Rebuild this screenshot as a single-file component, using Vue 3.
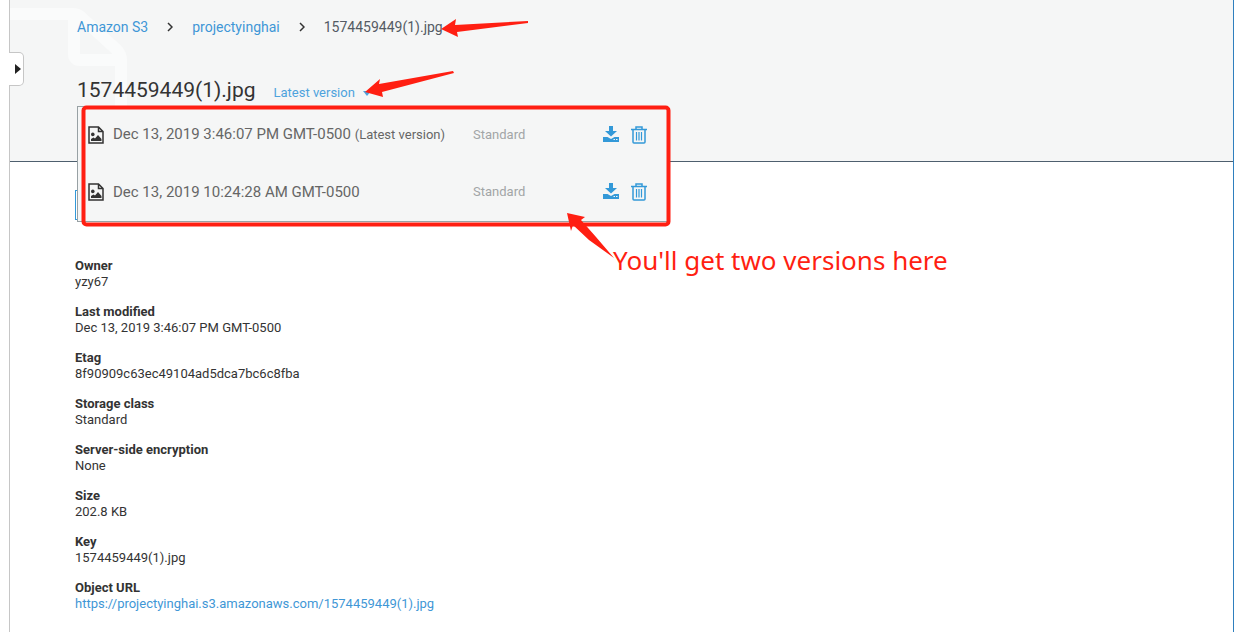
<script setup>
const fileName = '1574459449(1).jpg'

const versions = [
  { date: 'Dec 13, 2019 3:46:07 PM GMT-0500', note: '(Latest version)', storage: 'Standard' },
  { date: 'Dec 13, 2019 10:24:28 AM GMT-0500', note: '', storage: 'Standard' },
]

const details = [
  { label: 'Owner', value: 'yzy67' },
  { label: 'Last modified', value: 'Dec 13, 2019 3:46:07 PM GMT-0500' },
  { label: 'Etag', value: '8f90909c63ec49104ad5dca7bc6c8fba' },
  { label: 'Storage class', value: 'Standard' },
  { label: 'Server-side encryption', value: 'None' },
  { label: 'Size', value: '202.8 KB' },
  { label: 'Key', value: fileName },
  { label: 'Object URL', value: 'https://projectyinghai.s3.amazonaws.com/1574459449(1).jpg', link: true },
]
</script>

<template>
  <div class="page">
    <main class="console">
      <header class="head">
        <svg class="watermark" width="118" height="108" viewBox="0 0 118 108" aria-hidden="true">
          <path d="M0 14H63Q67 14 71 17L106 49Q111 54 111 60V108M64 14V54Q64 60 70 60H110" />
        </svg>
        <nav class="crumbs" aria-label="Breadcrumb">
          <a href="#s3">Amazon S3</a>
          <svg class="chevron" width="6" height="10" viewBox="0 0 6 10"><path d="M1 1l4 4-4 4" /></svg>
          <a href="#bucket">projectyinghai</a>
          <svg class="chevron" width="6" height="10" viewBox="0 0 6 10"><path d="M1 1l4 4-4 4" /></svg>
          <span>{{ fileName }}</span>
        </nav>
        <div class="title-row">
          <h1>{{ fileName }}</h1>
          <div class="picker">
            <button class="version-toggle" type="button" aria-expanded="true">
              Latest version
              <svg width="8" height="5" viewBox="0 0 8 5"><path d="M0 0h8L4 5z" fill="#4ea3dd" /></svg>
            </button>
          </div>
          <ul class="menu">
            <li v-for="v in versions" :key="v.date">
              <svg class="file" width="16" height="18" viewBox="0 0 16 18" aria-hidden="true">
                <path d="M1 1h9.500l4.500 4.500V17H1zM10.500 1v4.500H15" fill="none" stroke="#333" stroke-width="1.500" />
                <circle cx="4.800" cy="8.400" r="1.800" fill="#333" />
                <path d="M3 15v-2l2.500-1.500 1.500 1 3-3.500 3.500 4V15z" fill="#333" />
              </svg>
              <span class="when">{{ v.date }} <small v-if="v.note">{{ v.note }}</small></span>
              <span class="storage">{{ v.storage }}</span>
              <button type="button" aria-label="Download">
                <svg width="17" height="18" viewBox="0 0 17 18">
                  <path d="M6 0h4v5h4L8 10.500 2 5h4zM0 11h4.500l3.500 2 3.500-2H16v5H0z" fill="#3399d8" />
                  <path d="M10.500 13.500H12M13 13.500h1.500" stroke="#f5f6f6" />
                </svg>
              </button>
              <button type="button" aria-label="Delete">
                <svg width="16" height="18" viewBox="0 0 16 18" fill="none" stroke="#3399d8">
                  <path d="M0 3.500h16M5 3V1h6v2M2 4v12q0 1 1 1h10q1 0 1-1V4" stroke-width="1.500" />
                  <path d="M5.500 6v8.500M8 6v8.500M10.500 6v8.500" stroke-width="1.200" />
                </svg>
              </button>
            </li>
          </ul>
        </div>
      </header>

      <section class="body">
        <button class="open" type="button" aria-label="Open"></button>
        <dl>
          <div v-for="d in details" :key="d.label">
            <dt>{{ d.label }}</dt>
            <dd>
              <a v-if="d.link" :href="d.value">{{ d.value }}</a>
              <template v-else>{{ d.value }}</template>
            </dd>
          </div>
        </dl>
      </section>
    </main>

    <button class="drawer" type="button" aria-label="Open navigation">
      <svg width="6" height="10" viewBox="0 0 6 10"><path d="M0 0l6 5-6 5z" fill="#222" /></svg>
    </button>

    <svg class="marks" width="700" height="280" viewBox="0 0 700 280" fill="#ff1f12" aria-hidden="true">
      <path d="M441 29L456 19 455 25 528 21V23L457 32 458 37z" />
      <path d="M365 92L380 79 379 84 453 71 454 73 382 92 383 97z" />
      <path d="M567 213L585 217 581 220 596 237 614 258 589 240 573 225 571 231z" />
      <rect x="83.500" y="107.500" width="585" height="117" rx="3" fill="none" stroke="#ff1f12" stroke-width="4" />
    </svg>
    <p class="callout">You'll get two versions here</p>
  </div>
</template>

<style>
body {
  margin: 0;
  background: #fff;
}
</style>

<style scoped>
.page {
  position: relative;
  box-sizing: border-box;
  min-height: 100vh;
  padding-left: 9px;
  overflow: hidden;
  color: #333;
  font: 13px/16px Roboto, sans-serif;
}
.console {
  box-sizing: border-box;
  min-height: 100vh;
  border-left: 1px solid #c6c6c6;
  border-right: 1px solid #2e7fbe;
}
.head {
  position: relative;
  box-sizing: border-box;
  height: 162px;
  padding: 18px 24px 0 67px;
  background: #f5f6f6;
  border-bottom: 1px solid #4e5f6e;
}
.watermark {
  position: absolute;
  left: 0;
  top: 0;
  fill: none;
  stroke: #fafbfb;
  stroke-width: 12px;
}
a {
  color: #3f97d6;
  text-decoration: none;
}
.crumbs {
  position: relative;
  display: flex;
  align-items: center;
  gap: 19px;
  height: 18px;
  font-size: 14px;
  color: #545b64;
}
.chevron {
  fill: none;
  stroke: #333;
  stroke-width: 1.5px;
}
.title-row {
  position: relative;
  display: flex;
  align-items: baseline;
  gap: 18px;
  margin-top: 40px;
}
h1 {
  margin: 0;
  font-size: 21px;
  line-height: 28px;
  font-weight: 400;
}
button {
  padding: 0;
  border: 0;
  background: none;
  font: inherit;
  cursor: pointer;
}
.version-toggle {
  display: flex;
  align-items: center;
  gap: 8px;
  color: #4ea3dd;
}
.menu {
  position: absolute;
  left: 0;
  top: 30px;
  z-index: 1;
  box-sizing: border-box;
  width: 591px;
  margin: 0;
  padding: 0 20px 0 10px;
  list-style: none;
  background: #f5f6f6;
  border: 1px solid #98a1a4;
}
.menu li {
  display: flex;
  align-items: center;
  box-sizing: border-box;
  height: 57px;
  padding-bottom: 2px;
}
.menu svg {
  display: block;
}
.when {
  flex: 1;
  margin-left: 9px;
  font-size: 15px;
  color: #666;
}
.when small {
  font-size: 13px;
}
.storage {
  width: 130px;
  color: #a2a5a6;
}
.menu button + button {
  margin-left: 11px;
}
.body {
  padding: 28px 24px 24px 65px;
}
.open {
  display: block;
  width: 80px;
  height: 30px;
  border: 1px solid #3399d8;
}
dl {
  margin: 38px 0 0;
}
dl div {
  margin-bottom: 14px;
}
dt {
  font-weight: 700;
}
dd {
  margin: 0;
}
.drawer {
  position: absolute;
  left: 9px;
  top: 52px;
  display: flex;
  align-items: center;
  justify-content: flex-end;
  box-sizing: border-box;
  width: 15px;
  height: 34px;
  padding-right: 2px;
  background: #fff;
  border: 1px solid #c6c6c6;
  border-left: 0;
  border-radius: 0 5px 5px 0;
}
.marks {
  position: absolute;
  left: 0;
  top: 0;
  z-index: 2;
  pointer-events: none;
}
.callout {
  position: absolute;
  left: 613px;
  top: 242px;
  z-index: 2;
  margin: 0;
  color: #ff1f12;
  font: 26px/36px "Noto Sans", sans-serif;
}
</style>
